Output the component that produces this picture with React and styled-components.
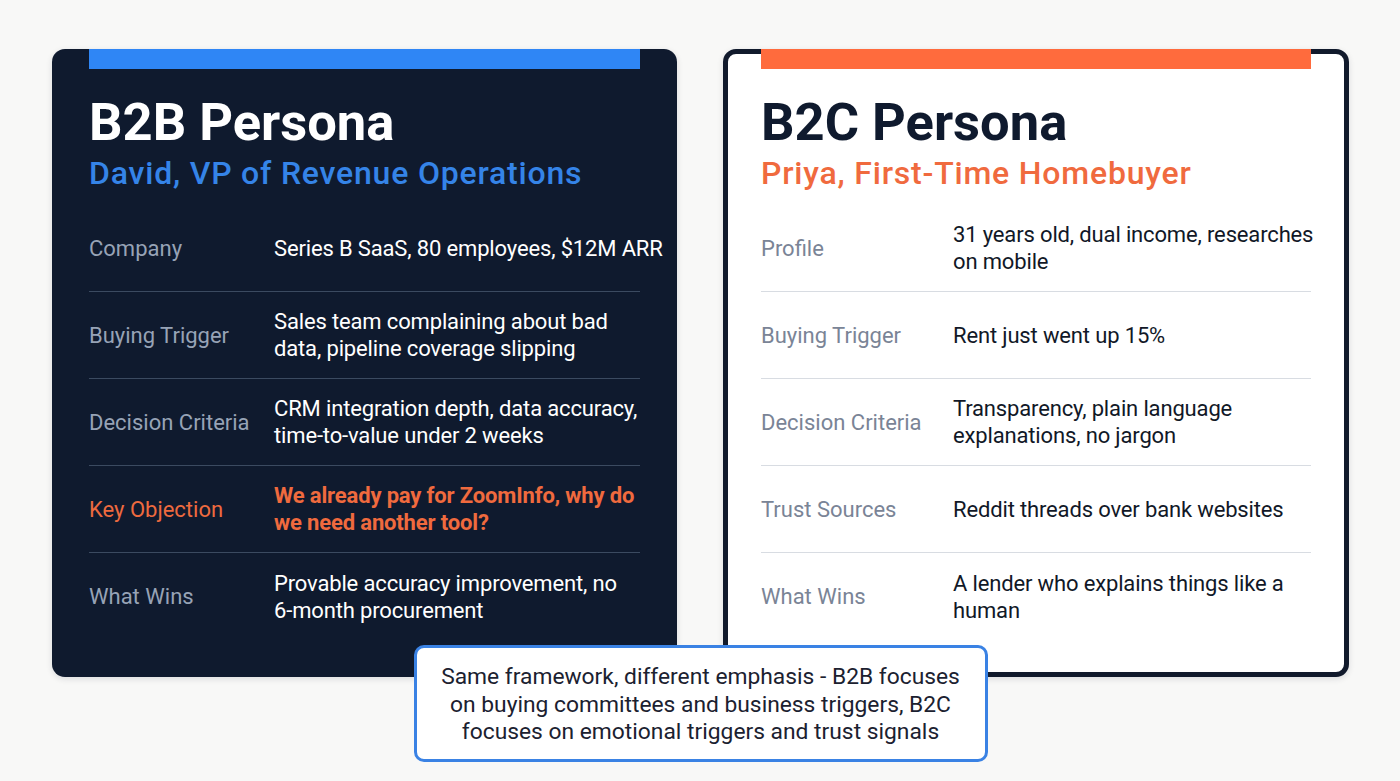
import styled, { createGlobalStyle } from "styled-components";

const GlobalStyle = createGlobalStyle`
  html, body {
    margin: 0;
    padding: 0;
    background: #f8f8f7;
  }
  body {
    font-family: Roboto, "Liberation Sans", sans-serif;
    -webkit-font-smoothing: antialiased;
  }
`;

const Page = styled.div`
  width: 1400px;
  height: 781px;
  box-sizing: border-box;
  padding: 49px 51px 0 52px;
  display: flex;
  flex-direction: column;
  align-items: center;
`;

const Cards = styled.div`
  display: grid;
  grid-template-columns: 625px 626px;
  gap: 46px;
  width: 100%;
`;

const Card = styled.section`
  box-sizing: border-box;
  height: 628px;
  border-radius: 13px;
  padding: 0 ${(p) => (p.$dark ? 37 : 33)}px;
  background: ${(p) => (p.$dark ? "#0f1a2e" : "#ffffff")};
  border: ${(p) => (p.$dark ? "none" : "5px solid #111a2c")};
  box-shadow: 0 2px 6px rgba(15, 26, 46, 0.12);
`;

const AccentBar = styled.div`
  height: 20px;
  margin-top: ${(p) => (p.$offset ? "-5px" : "0")};
  background: ${(p) => p.$color};
`;

const Title = styled.h1`
  margin: 26px 0 0;
  font-size: 52.5px;
  line-height: 55px;
  font-weight: 700;
  color: ${(p) => p.$color};
`;

const Subtitle = styled.h2`
  margin: 5px 0 0;
  font-size: 32px;
  line-height: 36px;
  font-weight: 500;
  letter-spacing: 0.8px;
  color: ${(p) => p.$color};
`;

const Rows = styled.div`
  margin-top: 14px;
`;

const Row = styled.div`
  display: grid;
  grid-template-columns: ${(p) => p.$labelWidth}px 1fr;
  align-items: center;
  height: 87px;
  box-sizing: border-box;
  border-bottom: 1px solid ${(p) => (p.$dark ? "#3b4a60" : "#d8dce2")};

  &:last-child {
    border-bottom: none;
  }
`;

const Label = styled.div`
  font-size: 22px;
  line-height: 27px;
  color: ${(p) => p.$color};
`;

const Value = styled.div`
  font-size: 22px;
  line-height: 27px;
  letter-spacing: -0.15px;
  white-space: nowrap;
  font-weight: ${(p) => (p.$bold ? 700 : 400)};
  color: ${(p) => p.$color};
`;

const Callout = styled.div`
  position: relative;
  z-index: 1;
  margin-top: -32px;
  width: 574px;
  height: 117px;
  box-sizing: border-box;
  padding: 15px 10px 0;
  background: #ffffff;
  border: 3px solid #3a82e4;
  border-radius: 10px;
  text-align: center;
  font-size: 22.8px;
  line-height: 27.5px;
  color: #1b2130;
`;

const b2b = [
  { label: "Company", lines: ["Series B SaaS, 80 employees, $12M ARR"] },
  { label: "Buying Trigger", lines: ["Sales team complaining about bad", "data, pipeline coverage slipping"] },
  { label: "Decision Criteria", lines: ["CRM integration depth, data accuracy,", "time-to-value under 2 weeks"] },
  { label: "Key Objection", lines: ["We already pay for ZoomInfo, why do", "we need another tool?"], alert: true },
  { label: "What Wins", lines: ["Provable accuracy improvement, no", "6-month procurement"] },
];

const b2c = [
  { label: "Profile", lines: ["31 years old, dual income, researches", "on mobile"] },
  { label: "Buying Trigger", lines: ["Rent just went up 15%"] },
  { label: "Decision Criteria", lines: ["Transparency, plain language", "explanations, no jargon"] },
  { label: "Trust Sources", lines: ["Reddit threads over bank websites"] },
  { label: "What Wins", lines: ["A lender who explains things like a", "human"] },
];

function PersonaCard({ dark, accent, title, subtitle, rows, labelWidth }) {
  const labelColor = dark ? "#97a3b6" : "#7a8496";
  const valueColor = dark ? "#ffffff" : "#111827";
  return (
    <Card $dark={dark}>
      <AccentBar $color={accent} $offset={!dark} />
      <Title $color={dark ? "#ffffff" : "#0f1a2e"}>{title}</Title>
      <Subtitle $color={dark ? "#3584e8" : "#f06a3e"}>{subtitle}</Subtitle>
      <Rows>
        {rows.map((r) => (
          <Row key={r.label} $dark={dark} $labelWidth={labelWidth}>
            <Label $color={r.alert ? "#ee6a3f" : labelColor}>{r.label}</Label>
            <Value $bold={r.alert} $color={r.alert ? "#f06a3e" : valueColor}>
              {r.lines.map((l, i) => (
                <div key={i}>{l}</div>
              ))}
            </Value>
          </Row>
        ))}
      </Rows>
    </Card>
  );
}

export default function App() {
  return (
    <Page>
      <GlobalStyle />
      <Cards>
        <PersonaCard
          dark
          accent="#2f86f5"
          title="B2B Persona"
          subtitle="David, VP of Revenue Operations"
          rows={b2b}
          labelWidth={185}
        />
        <PersonaCard
          accent="#ff6b3d"
          title="B2C Persona"
          subtitle="Priya, First-Time Homebuyer"
          rows={b2c}
          labelWidth={192}
        />
      </Cards>
      <Callout>
        <div>Same framework, different emphasis - B2B focuses</div>
        <div>on buying committees and business triggers, B2C</div>
        <div>focuses on emotional triggers and trust signals</div>
      </Callout>
    </Page>
  );
}
